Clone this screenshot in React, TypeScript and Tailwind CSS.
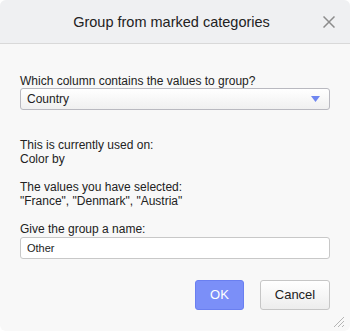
export default function App() {
  return (
    <div className="h-[331px] w-[350px] bg-white font-['Liberation_Sans',Arial,sans-serif] text-[12px] leading-[14px] text-[#222]">
      <div className="flex h-full flex-col overflow-hidden rounded-[6px] bg-[#f8f8f8]">
        <div className="relative flex h-[44px] shrink-0 items-center justify-center border-b border-[#d9d9d9] bg-[#eff0f2] pr-[7px]">
          <span className="text-[14.5px] text-[#222]">Group from marked categories</span>
          <button type="button" className="absolute right-[15px] top-[16px]">
            <svg width="12" height="12" viewBox="0 0 12 12">
              <path d="M0.5 0.5 L11.5 11.5 M11.5 0.5 L0.5 11.5" stroke="#8c8c8c" strokeWidth="1.5" />
            </svg>
          </button>
        </div>

        <div className="relative flex flex-1 flex-col px-5 pt-[30px]">
          <label className="block">Which column contains the values to group?</label>
          <div className="flex h-[22px] items-center justify-between rounded-[3px] border border-[#b9b9c0] bg-gradient-to-b from-white to-[#f0f0f0] pl-[6px] pr-[9px]">
            <span>Country</span>
            <svg width="9" height="6" viewBox="0 0 9 6">
              <path d="M0 0 L9 0 L4.5 6 Z" fill="#6f86f0" />
            </svg>
          </div>

          <div className="mt-[28px]">
            <div>This is currently used on:</div>
            <div>Color by</div>
            <div className="mt-[14px]">The values you have selected:</div>
            <div>"France", "Denmark", "Austria"</div>
          </div>

          <label className="mt-[14px] block">Give the group a name:</label>
          <input
            type="text"
            defaultValue="Other"
            className="mt-[1px] h-[22px] w-full rounded-[3px] border border-[#c8c8c8] bg-white px-[6px] text-[11px] text-[#222] outline-none"
          />

          <div className="mt-[21px] flex justify-end gap-[16px]">
            <button
              type="button"
              className="h-[30px] w-[49px] rounded-[3px] border border-[#6a7ff0] bg-[#7b8ff8] text-[13px] text-white"
            >
              OK
            </button>
            <button
              type="button"
              className="h-[30px] w-[70px] rounded-[3px] border border-[#c6c6c6] bg-gradient-to-b from-white to-[#ededed] text-[13px] text-[#222]"
            >
              Cancel
            </button>
          </div>

          <svg className="absolute bottom-[3px] right-[5px]" width="14" height="14" viewBox="0 0 14 14">
            <path d="M13 3 L3 13 M13 7 L7 13 M13 11 L11 13" stroke="#b5b5b5" strokeWidth="1" />
          </svg>
        </div>
      </div>
    </div>
  )
}
